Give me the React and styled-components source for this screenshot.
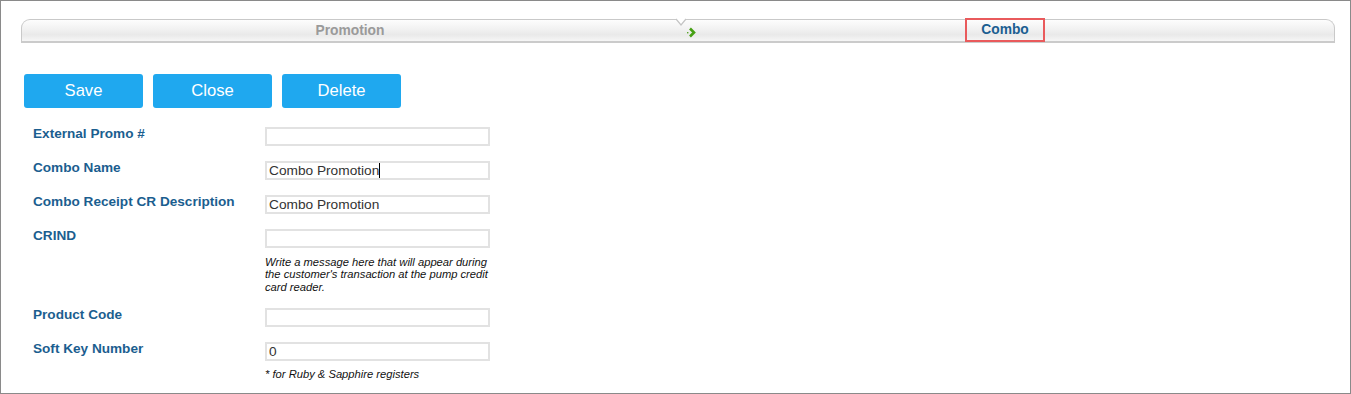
import React from 'react';
import styled, { createGlobalStyle } from 'styled-components';

const GlobalStyle = createGlobalStyle`
  html, body { margin: 0; padding: 0; background: #fff; }
  body { font-family: "Liberation Sans", Arial, sans-serif; }
`;

const Frame = styled.div`
  box-sizing: border-box;
  width: 1351px;
  height: 394px;
  border: 1px solid #8a8a8a;
  padding: 18px 15px 0 20px;
`;

const TabBar = styled.div`
  position: relative;
  display: flex;
  height: 24px;
  box-sizing: border-box;
  border: 1px solid #c9c9c9;
  border-bottom: 2px solid #cbcbcb;
  border-radius: 9px 9px 0 0;
  background: linear-gradient(#fdfdfd 0%, #f1f1f1 45%, #e9e9e9 70%, #f6f6f6 100%);
`;

const Tab = styled.div`
  display: flex;
  align-items: center;
  justify-content: center;
  width: ${p => p.width || 'auto'};
  flex: ${p => (p.width ? 'none' : '1')};
  padding-bottom: 1px;
  font-size: 13.8px;
  font-weight: bold;
  color: ${p => (p.active ? '#1b5e91' : '#9a9a9a')};
`;

const Highlight = styled.span`
  display: inline-flex;
  align-items: center;
  justify-content: center;
  box-sizing: border-box;
  width: 80px;
  height: 24px;
  margin: -1px 2px 0 0;
  border: 2px solid #e95a5c;
`;

const Notch = styled.svg`
  position: absolute;
  left: 654px;
  top: -2px;
`;

const Arrow = styled.svg`
  position: absolute;
  left: 665px;
  top: 7px;
`;

const Buttons = styled.div`
  display: flex;
  gap: 10px;
  margin: 31px 0 0 3px;
`;

const Button = styled.button`
  width: 119px;
  height: 34px;
  border: none;
  border-radius: 3px;
  background: #1fa8ef;
  color: #fff;
  font-family: "Liberation Sans", Arial, sans-serif;
  font-size: 16.6px;
  padding: 0;
`;

const Form = styled.div`
  display: flex;
  flex-direction: column;
  gap: 15px;
  margin: 19px 0 0 12px;
`;

const Row = styled.div`
  display: grid;
  grid-template-columns: 232px 225px;
`;

const Label = styled.div`
  font-size: 13.6px;
  font-weight: bold;
  color: #1b5e8f;
  line-height: 14px;
`;

const Field = styled.div`
  box-sizing: border-box;
  height: 19px;
  border: 2px solid #e2e2e2;
  padding: 0 0 0 2px;
  font-size: 13.7px;
  line-height: 15px;
  color: #333;
  display: flex;
  align-items: center;
`;

const Caret = styled.span`
  display: inline-block;
  width: 1px;
  height: 15px;
  background: #000;
`;

const Help = styled.div`
  grid-column: 2;
  margin-top: ${p => p.top || '3px'};
  font-size: 11.2px;
  font-style: italic;
  line-height: 12.3px;
  color: #111;
`;

function FormRow({ label, value, caret, help, helpTop }) {
  return (
    <Row>
      <Label>{label}</Label>
      <Field>
        {value}
        {caret && <Caret />}
      </Field>
      {help && <Help top={helpTop}>{help}</Help>}
    </Row>
  );
}

export default function App() {
  return (
    <Frame>
      <GlobalStyle />
      <TabBar>
        <Tab width="656px">Promotion</Tab>
        <Tab active>
          <Highlight>Combo</Highlight>
        </Tab>
        <Notch width="10" height="9" viewBox="0 0 10 9">
          <path d="M0 1 L5 7 L10 1" fill="#fff" stroke="#c4c4c4" strokeWidth="1.2" />
        </Notch>
        <Arrow width="10" height="11" viewBox="0 0 10 11">
          <rect x="0" y="5" width="1.4" height="1.4" fill="#5aa62a" />
          <path d="M3 1.5 L7 5.5 L3 9.5" fill="none" stroke="#46a014" strokeWidth="2.6" />
        </Arrow>
      </TabBar>
      <Buttons>
        <Button>Save</Button>
        <Button>Close</Button>
        <Button>Delete</Button>
      </Buttons>
      <Form>
        <FormRow label="External Promo #" />
        <FormRow label="Combo Name" value="Combo Promotion" caret />
        <FormRow label="Combo Receipt CR Description" value="Combo Promotion" />
        <FormRow
          label="CRIND"
          helpTop="8px"
          help="Write a message here that will appear during the customer's transaction at the pump credit card reader."
        />
        <FormRow label="Product Code" />
        <FormRow
          label="Soft Key Number"
          value="0"
          helpTop="7px"
          help="* for Ruby & Sapphire registers"
        />
      </Form>
    </Frame>
  );
}
